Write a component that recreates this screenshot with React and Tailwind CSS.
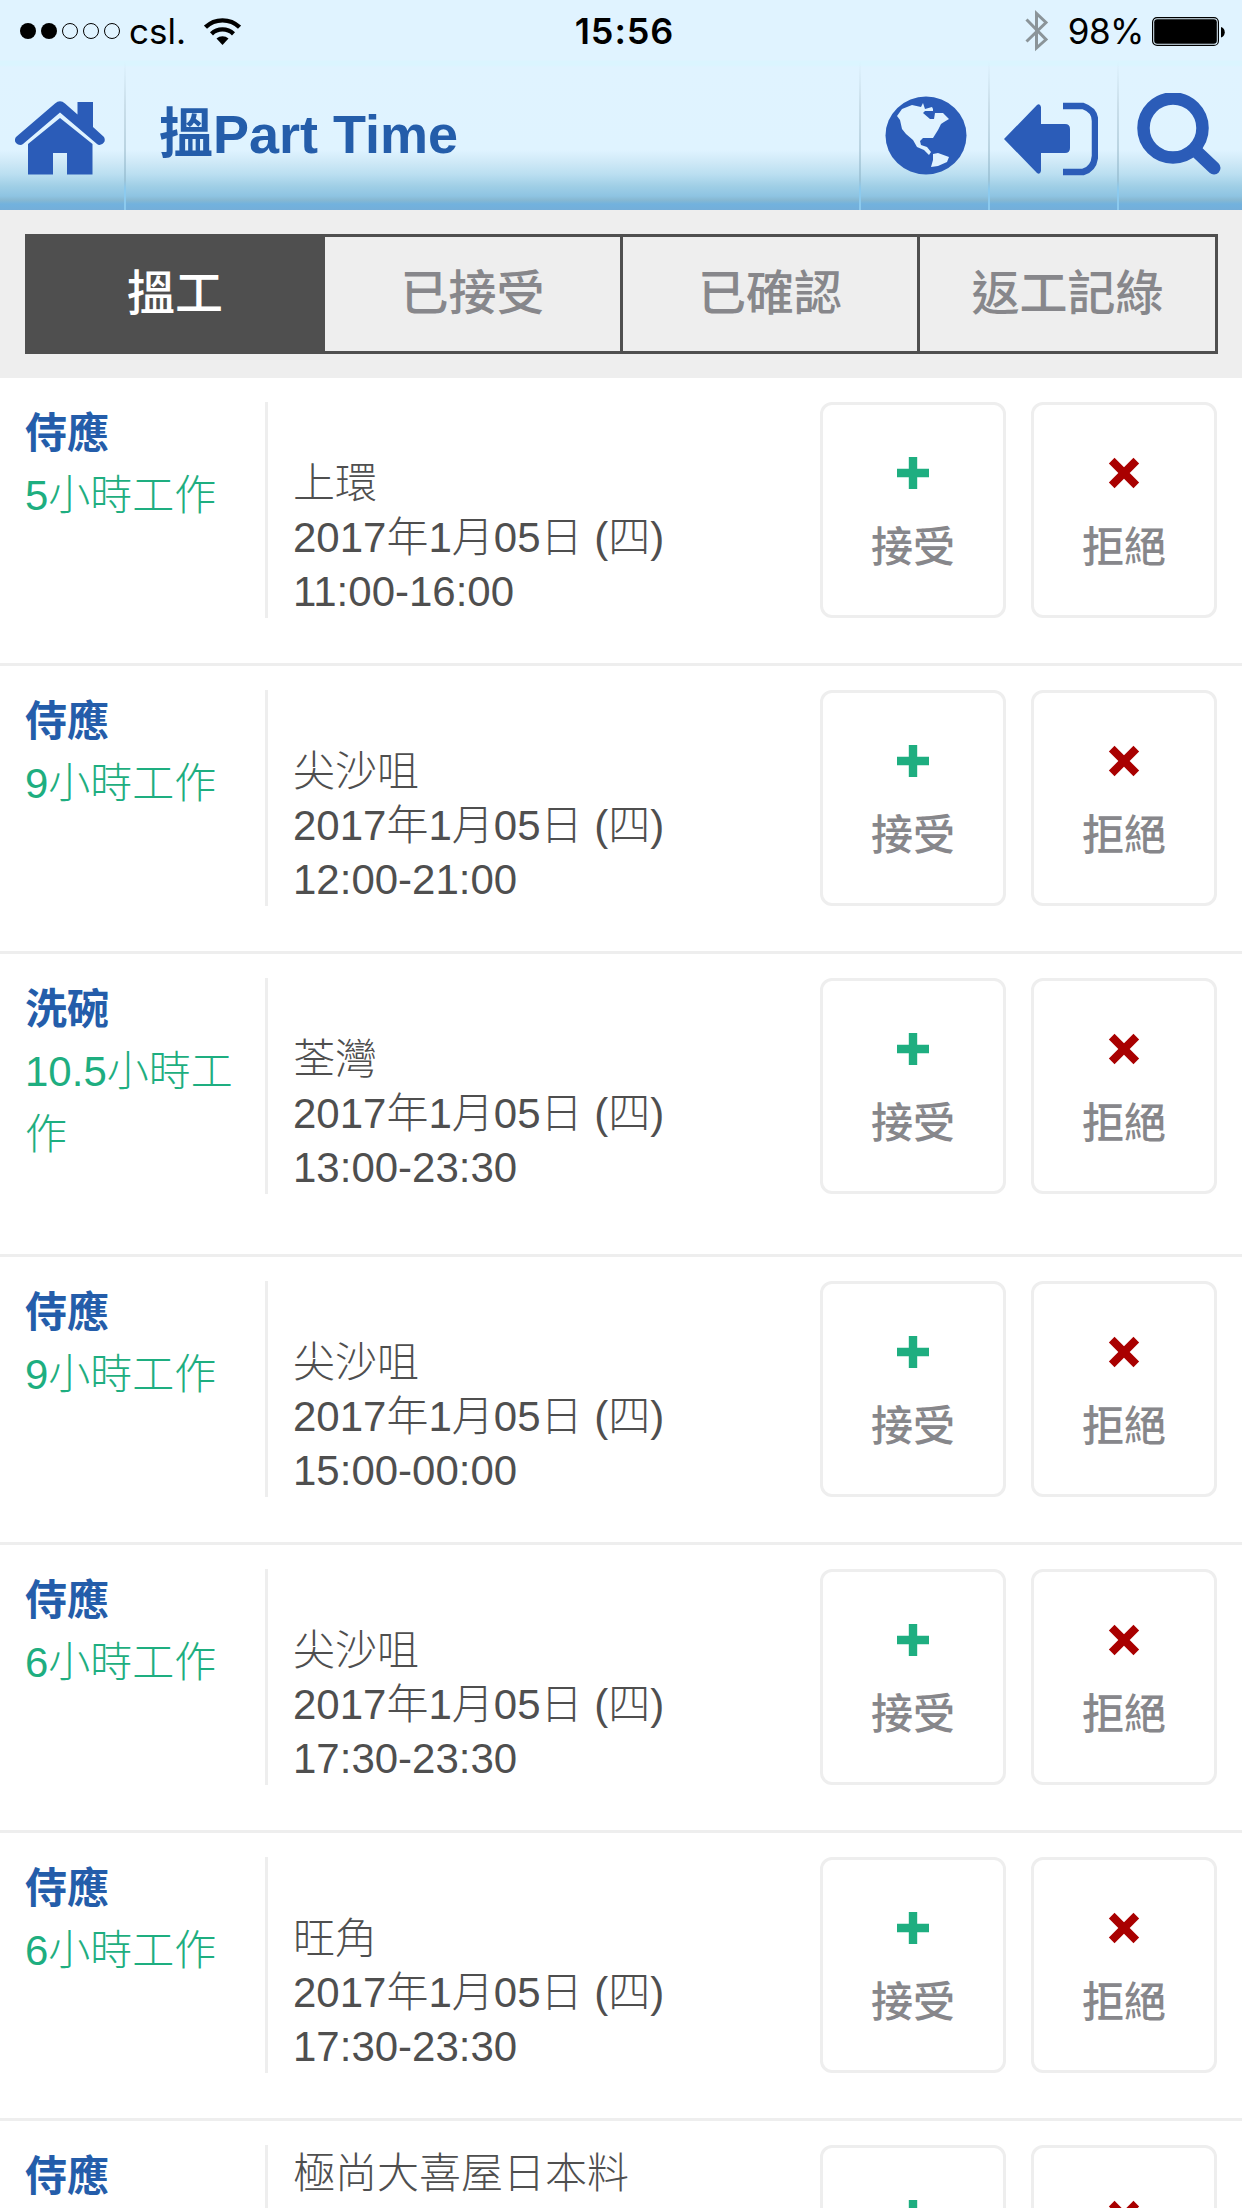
import React from "react";

const JOBS = [
  { role: "侍應", hours: "5小時工作", place: "上環", date: "2017年1月05日 (四)", time: "11:00-16:00" },
  { role: "侍應", hours: "9小時工作", place: "尖沙咀", date: "2017年1月05日 (四)", time: "12:00-21:00" },
  { role: "洗碗", hours: "10.5小時工作", place: "荃灣", date: "2017年1月05日 (四)", time: "13:00-23:30" },
  { role: "侍應", hours: "9小時工作", place: "尖沙咀", date: "2017年1月05日 (四)", time: "15:00-00:00" },
  { role: "侍應", hours: "6小時工作", place: "尖沙咀", date: "2017年1月05日 (四)", time: "17:30-23:30" },
  { role: "侍應", hours: "6小時工作", place: "旺角", date: "2017年1月05日 (四)", time: "17:30-23:30" },
  { role: "侍應", place: "極尚大喜屋日本料", partial: true },
];

const TABS = ["搵工", "已接受", "已確認", "返工記綠"];

function StatusBar() {
  return (
    <div className="flex h-[62px] shrink-0 items-center justify-between pl-5 pr-[17px] font-['Inter',sans-serif] text-black">
      <div className="flex w-[480px] items-center">
        <svg width="100" height="16" viewBox="0 0 100 16">
          <circle cx="8" cy="8" r="8" />
          <circle cx="29" cy="8" r="8" />
          {[50, 71, 92].map((x) => (
            <circle key={x} cx={x} cy="8" r="7.5" fill="none" stroke="#000" strokeWidth="1" />
          ))}
        </svg>
        <span className="ml-[9px] w-[75px] text-[35px] leading-[62px]">csl.</span>
        <svg width="37" height="27" viewBox="0 0 37 27">
          <g fill="none" stroke="#000" strokeWidth="4.4">
            <path d="M1.500 9.200a24.500 24.500 0 0 1 34 0" />
            <path d="M7.500 15.800a16 16 0 0 1 22 0" />
          </g>
          <path d="M18.500 27l-6-6.400a8.600 8.600 0 0 1 12 0z" />
        </svg>
      </div>
      <span className="ml-1 text-[36px] font-semibold tracking-[0.900px]">15:56</span>
      <div className="flex w-[480px] items-center justify-end">
        <svg width="24" height="42" viewBox="0 0 24 42" fill="none" stroke="#8b9499" strokeWidth="3">
          <path d="M1.500 9.500L21 29.500 11.500 38V3.500L21 12.500 1.500 31.500" />
        </svg>
        <span className="ml-[19px] text-[35px] tracking-[-0.500px]">98%</span>
        <svg className="ml-[8px]" width="73" height="29" viewBox="0 0 73 29">
          <rect x="0.600" y="0.600" width="65.800" height="27.800" rx="4.500" fill="none" stroke="#000" strokeWidth="1.200" />
          <rect x="2.200" y="2.200" width="62.600" height="24.600" rx="3" />
          <path d="M69 10c5 1 5 9.500 0 10.500z" />
        </svg>
      </div>
    </div>
  );
}

function HomeIcon() {
  return (
    <svg width="90" height="74" viewBox="0 0 90 74" fill="#2b5cb8">
      <path d="M1 36L40 2.500q5-4.500 10 0l12.500 11V1H78v25l11 10q2.500 5-3 7.500-2 1-4-.5L45 11.500 8 43q-2 1.500-5 .5-5-3-2-7.500z" />
      <path d="M45 17l32.500 26v30.500H52V52H38v21.500H13V43z" />
    </svg>
  );
}

function GlobeIcon() {
  return (
    <svg width="82" height="79" viewBox="0 0 82 79">
      <ellipse cx="41" cy="39.500" rx="40.500" ry="39" fill="#2b5cb8" />
      <path fill="#e0f3ff" d="M12 20l5-7 10-4 9 2 2-4 2 6 7-2 1 2v2l-8 0-2 2 7 6 4 0 1-6h8l6 6-5 3-3 2-3 6-5 8H38l-3 3 1 4 6 2 4 5-2 3-5-5-7-3-4-7-7-6-4-5-2-9z" />
      <path fill="#e0f3ff" d="M48 58l5-1 11 4-2 5-9 4-7 1 2-7z" />
    </svg>
  );
}

function ExitIcon() {
  return (
    <svg width="94" height="74" viewBox="0 0 94 74">
      <path d="M0 37L33 3q3-2 4 2v17h24q5 0 5 5v19q0 5-5 5H37v18q-1 4-4 2z" fill="#2b5cb8" />
      <path d="M59 4h20q12 4 12 15v35q-1 13-12 16H59" fill="none" stroke="#2b5cb8" strokeWidth="6.500" />
    </svg>
  );
}

function SearchIcon() {
  return (
    <svg width="86" height="82" viewBox="0 0 86 82" fill="none" stroke="#2b5cb8">
      <circle cx="36" cy="35" r="29.500" strokeWidth="12.500" />
      <path d="M59 58l18 17" strokeWidth="13" strokeLinecap="round" />
    </svg>
  );
}

function Divider() {
  return <div className="h-[148px] w-[2px] shrink-0 bg-[linear-gradient(to_bottom,#cfe3ee00_0%,#c9deea_30%,#b9d3e1_60%,#9cc4d8_80%,#8ccaee_86%,#8ccaee_100%)]" />;
}

function Header() {
  return (
    <header className="flex h-[210px] flex-col bg-[linear-gradient(to_bottom,#e0f3ff_0px,#e0f3ff_60px,#dbf5ff_61px,#dbf5ff_65px,#e0f3ff_67px,#dff3ff_150px,#cfe9f7_162px,#bbdff1_174px,#a0cfe6_186px,#8ec4e2_196px,#87b8d2_200px,#72b2de_204px,#74aed9_210px)]">
      <StatusBar />
      <div className="flex h-[148px] items-start">
        <div className="flex w-[124px] shrink-0 justify-start pl-[15px] pt-[39px]"><HomeIcon /></div>
        <Divider />
        <h1 className="grow pl-[33px] pt-[32px] font-['Liberation_Sans','Noto_Sans_CJK_TC',sans-serif] text-[54px] font-bold leading-[80px] text-[#245daa]">搵Part Time</h1>
        <Divider />
        <div className="flex w-[127px] shrink-0 pl-[24px] pt-[34px]"><GlobeIcon /></div>
        <Divider />
        <div className="flex w-[127px] shrink-0 pl-[14px] pt-[40px]"><ExitIcon /></div>
        <Divider />
        <div className="flex w-[123px] shrink-0 pl-[18px] pt-[31px]"><SearchIcon /></div>
      </div>
    </header>
  );
}

function ActionButton({ kind, label }) {
  return (
    <button className="flex h-[216px] w-[186px] shrink-0 flex-col items-center rounded-xl border-[3px] border-[#eee] pt-[52px]">
      <svg className="shrink-0" width="32" height="32" viewBox="0 0 32 32">
        {kind === "accept" ? (
          <path d="M16 0v32M0 16h32" stroke="#1eae80" strokeWidth="8.400" />
        ) : (
          <path d="M3.700 3.700l24.600 24.600M28.300 3.700L3.700 28.300" stroke="#a90000" strokeWidth="8" />
        )}
      </svg>
      <span className="mt-[27px] text-[42px] font-medium leading-[63px] text-[#87878b]">{label}</span>
    </button>
  );
}

function JobRow({ job }) {
  return (
    <li className="flex min-h-[288px] items-start border-b-[3px] border-[#eee] px-[25px] pt-6">
      <div className="w-[240px] shrink-0 pb-[87px] text-[42px] leading-[63px]">
        <div className="font-bold text-[#245daa]">{job.role}</div>
        {job.hours && <div className="-mt-px mb-px w-[220px] font-light text-[#1eae80]">{job.hours}</div>}
      </div>
      <div className="h-[216px] w-[3px] shrink-0 bg-[#eee]" />
      <div className={`${job.partial ? "pt-[2px]" : "pt-[55px]"} grow pl-[25px] text-[42px] font-light leading-[54px] text-[#4f4f4f]`}>
        <div>{job.place}</div>
        {job.date && <div>{job.date}</div>}
        {job.time && <div>{job.time}</div>}
      </div>
      <div className="flex shrink-0 gap-[25px]">
        <ActionButton kind="accept" label={job.partial ? "" : "接受"} />
        <ActionButton kind="reject" label={job.partial ? "" : "拒絕"} />
      </div>
    </li>
  );
}

export default function App() {
  return (
    <div className="h-[2208px] w-[1242px] overflow-hidden bg-white font-['Liberation_Sans','Noto_Sans_CJK_TC',sans-serif]">
      <Header />
      <nav className="h-[168px] bg-[#eee] px-[25px] pt-6">
        <div className="grid h-[120px] w-[1193px] grid-cols-[300px_298px_297px_298px] bg-[#4f4f4f] py-[3px]">
          {TABS.map((tab, i) => (
            <button
              key={tab}
              className={`border-r-[3px] border-[#4f4f4f] text-[48px] font-medium leading-[72px] ${i === 0 ? "bg-[#4f4f4f] pl-[3px] text-white" : "bg-[#eee] text-[#87878b]"}`}
            >
              {tab}
            </button>
          ))}
        </div>
      </nav>
      <ul>
        {JOBS.map((job, i) => (
          <JobRow key={i} job={job} />
        ))}
      </ul>
    </div>
  );
}
